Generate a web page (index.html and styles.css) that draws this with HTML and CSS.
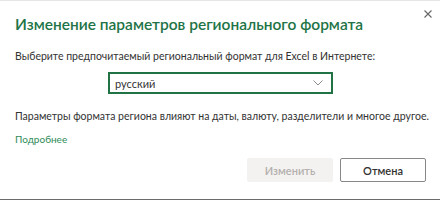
FILE: index.html
```html
<!DOCTYPE html>
<html lang="ru">
<head>
    <meta charset="UTF-8" />
    <meta name="viewport" content="width=device-width, initial-scale=1.0" />
    <title>Изменение параметров регионального формата</title>
    <link rel="stylesheet" href="styles.css">
</head>
<body>
    <div class="dialog">
        <div class="head">
            <h1 class="title">Изменение параметров регионального формата</h1>
            <svg class="close" width="8" height="8" viewBox="0 0 8 8">
                <path d="M0.5 0.5 L7.5 7.5 M7.5 0.5 L0.5 7.5" stroke="#666" stroke-width="1.1"/>
            </svg>
        </div>
        <p class="text first">Выберите предпочитаемый региональный формат для Excel в Интернете:</p>
        <div class="pick">
            <div class="select">
                <span>русский</span>
                <svg class="chev" width="10" height="6" viewBox="0 0 10 6">
                    <path d="M0.5 0.5 L5 5 L9.5 0.5" fill="none" stroke="#8a8a8a" stroke-width="1"/>
                </svg>
            </div>
        </div>
        <p class="text">Параметры формата региона влияют на даты, валюту, разделители и многое другое.</p>
        <a class="more" href="#">Подробнее</a>
        <div class="buttons">
            <button type="button" class="btn apply" disabled>Изменить</button>
            <button type="button" class="btn cancel">Отмена</button>
        </div>
    </div>
</body>
</html>
```

FILE: styles.css
```css
body{
    margin: 0;
    background: #fff;
    font-family: "Segoe UI", Lato, "Open Sans", sans-serif;
    color: #333;
}
.dialog{
    width: 440px;
    height: 200px;
    box-sizing: border-box;
    border-top: 1px solid #e6e6e6;
    border-bottom: 1px solid #6b6b6b;
    padding: 0 14px 0 15px;
    overflow: hidden;
}
.head{
    display: flex;
    justify-content: space-between;
    align-items: flex-start;
}
.title{
    margin: 13px 0 0 0;
    font-size: 15.5px;
    line-height: 20px;
    font-weight: 600;
    color: #217346;
    white-space: nowrap;
}
.close{
    margin: 9px -6px 0 0;
}
.text{
    margin: 0;
    font-size: 10.5px;
    line-height: 16px;
    white-space: nowrap;
}
.first{
    margin-top: 14px;
}
.pick{
    display: flex;
    justify-content: center;
    margin: 8px 0 14px 0;
}
.select{
    width: 225px;
    height: 22px;
    box-sizing: border-box;
    border: 2px solid #217346;
    display: flex;
    align-items: center;
    justify-content: space-between;
    padding: 0 8px 0 5px;
    font-size: 11px;
}
.more{
    display: block;
    margin-top: 8px;
    font-size: 10px;
    line-height: 14px;
    color: #2e8b57;
    text-decoration: none;
}
.buttons{
    display: flex;
    justify-content: flex-end;
    gap: 7px;
    margin-top: 12px;
}
.btn{
    width: 86px;
    height: 24px;
    font-family: inherit;
    font-size: 11px;
    font-weight: 600;
    border-radius: 2px;
}
.apply{
    background: #f3f2f1;
    border: 1px solid #f3f2f1;
    color: #b3b0ad;
}
.cancel{
    background: #fff;
    border: 1px solid #8a8886;
    color: #323130;
}
```
